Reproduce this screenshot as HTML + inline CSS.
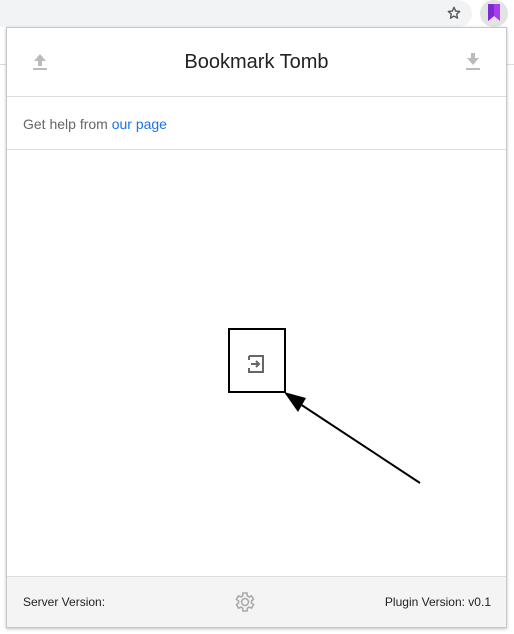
<!DOCTYPE html>
<html><head><style>
body{margin:0;width:514px;height:634px;background:#fff;position:relative;overflow:hidden;font-family:"Liberation Sans",sans-serif}
.top{position:absolute;left:0;top:0;width:514px;height:27px;background:#fff}
.omni{position:absolute;left:0;top:0;width:472px;height:27px;background:#f1f3f4;border-radius:0 14px 14px 0}
.ext{position:absolute;left:480px;top:0;width:28px;height:27px;border-radius:14px;background:#e3e3e3}
.pline{position:absolute;top:64px;height:1px;background:#ddd}
.pop{position:absolute;left:6px;top:27px;width:499px;height:599px;border:1px solid #c8c8c8;background:#fff;box-shadow:0 1px 3px rgba(0,0,0,.25)}
.hdr{height:68px;border-bottom:1px solid #ddd;position:relative}
.title{position:absolute;left:0;right:0;top:23px;text-align:center;font-size:20px;color:#222}
.help{height:52px;border-bottom:1px solid #ddd;font-size:14px;color:#666;line-height:54px;padding-left:16px}
.help a{color:#1a73e8;text-decoration:none}
.ftr{position:absolute;left:0;right:0;bottom:0;height:50px;background:#f4f4f4;border-top:1px solid #ddd;font-size:12px;color:#222}
</style></head><body>
<div class="top"><div class="omni"></div>
<svg style="position:absolute;left:446px;top:5px" width="16" height="16" viewBox="0 0 24 24"><path d="M12 3.5l2.5 5.6 6 .6-4.5 4 1.3 6L12 16.6 6.7 19.7 8 13.7l-4.5-4 6-.6z" fill="none" stroke="#555" stroke-width="2" stroke-linejoin="round"/></svg>
<div class="ext"></div>
<svg style="position:absolute;left:487px;top:4px" width="14" height="18" viewBox="0 0 14 18"><path d="M1 0h12v17l-6-5-6 5z" fill="#a83cf0"/><path d="M1 0h6v12l-6 5z" fill="#7b2ad0"/></svg>
</div>
<div class="pline" style="left:0;width:7px"></div><div class="pline" style="left:507px;width:7px"></div>
<div class="pop">
<div class="hdr">
<svg style="position:absolute;left:25px;top:25px" width="16" height="18" viewBox="0 0 16 18"><path d="M8 1L2 8h4v5h4V8h4z" fill="#bbb"/><rect x="1" y="15" width="14" height="2" fill="#bbb"/></svg>
<div class="title">Bookmark Tomb</div>
<svg style="position:absolute;left:458px;top:24px" width="16" height="18" viewBox="0 0 16 18"><path d="M8 13L2 6h4V1h4v5h4z" fill="#bbb"/><rect x="1" y="16" width="14" height="2" fill="#bbb"/></svg>
</div>
<div class="help">Get help from <a>our page</a></div>
<div style="position:absolute;left:221px;top:300px;width:54px;height:61px;border:2px solid #000"></div>
<svg style="position:absolute;left:239px;top:326px" width="20" height="20" viewBox="0 0 20 20"><path d="M3 2h14v16H3v-4M3 6V2" fill="none" stroke="#666" stroke-width="2"/><path d="M5 10h8M10 7l3 3-3 3" fill="none" stroke="#666" stroke-width="2"/></svg>
<svg style="position:absolute;left:0;top:0" width="499" height="600"><line x1="413" y1="455" x2="287" y2="372" stroke="#000" stroke-width="2"/><path d="M277 364l22 6-8 14z" fill="#000"/></svg>
<div class="ftr">
<span style="position:absolute;left:16px;top:18px">Server Version:</span>
<svg style="position:absolute;left:226px;top:13px" width="24" height="24" viewBox="0 0 24 24"><path d="M19.4 13a7.5 7.5 0 000-2l2.1-1.6-2-3.5-2.5 1a7 7 0 00-1.7-1L15 3h-4l-.4 2.9a7 7 0 00-1.7 1l-2.5-1-2 3.5L6.6 11a7.5 7.5 0 000 2l-2.1 1.6 2 3.5 2.5-1a7 7 0 001.7 1L11 21h4l.4-2.9a7 7 0 001.7-1l2.5 1 2-3.5zM13 15.5a3.5 3.5 0 110-7 3.5 3.5 0 010 7z" transform="translate(-1 0)" fill="none" stroke="#aaa" stroke-width="1.6"/></svg>
<span style="position:absolute;right:15px;top:18px">Plugin Version: v0.1</span>
</div>
</div>
</body></html>
